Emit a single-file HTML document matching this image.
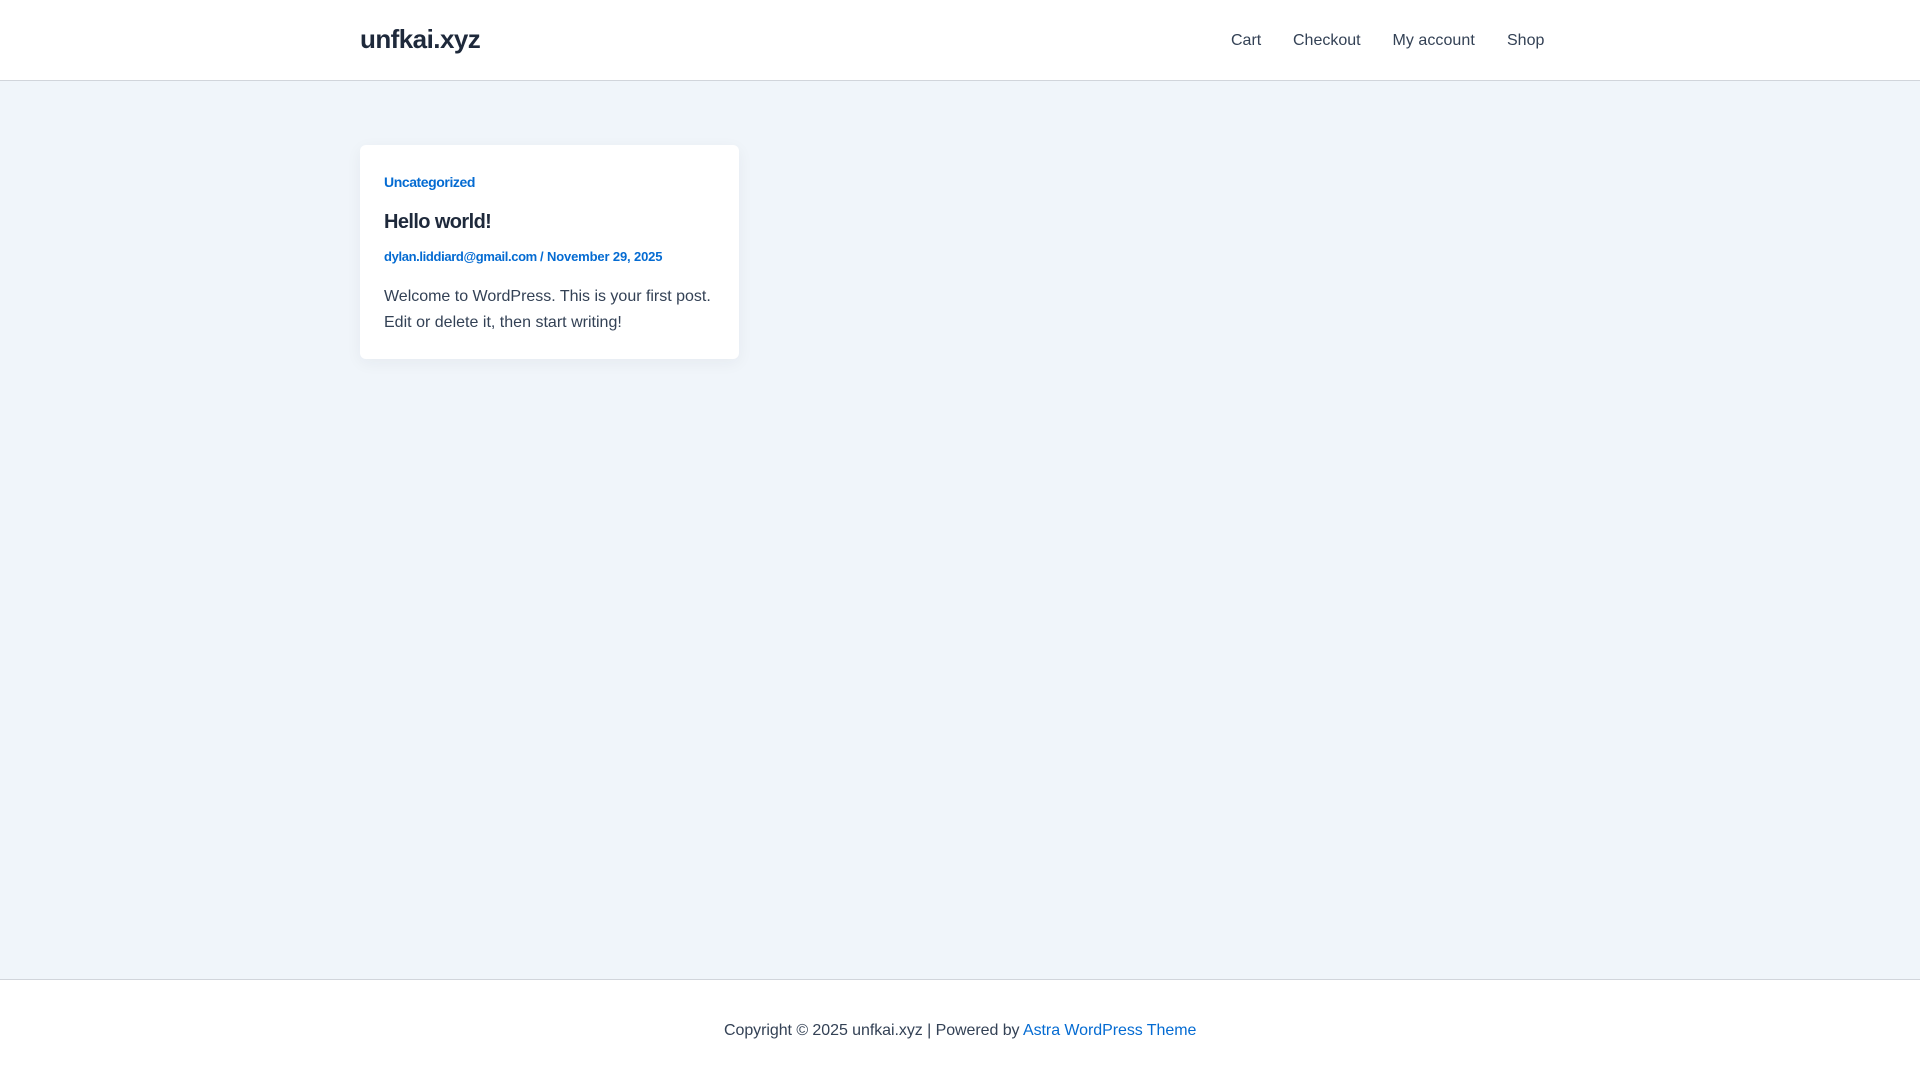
<!DOCTYPE html>
<html lang="en">
<head>
<meta charset="utf-8">
<title>unfkai.xyz</title>
<style>
html,body{margin:0;padding:0;width:1920px;height:1080px;overflow:hidden;background:#f0f5fa;font-family:"Liberation Sans",Arial,sans-serif;color:#334155}
.t{position:absolute;white-space:nowrap;display:block}
a{color:inherit;text-decoration:none}
#hdr{position:absolute;left:0;top:0;width:1920px;height:80px;background:#fff;border-bottom:1px solid #d1d5db}
#ftr{position:absolute;left:0;top:979px;width:1920px;height:100px;background:#fff;border-top:1px solid #d1d5db}
#card{position:absolute;left:360px;top:145px;width:379px;height:214px;background:#fff;border-radius:6px;box-shadow:0 4px 16px rgba(30,41,59,.05)}
.b{color:#046bd2;font-weight:bold}
</style>
</head>
<body>
<div id="hdr"></div>
<a class="t" href="#" style="left:360px;top:23px;font-size:26px;line-height:32px;font-weight:bold;color:#1e293b;letter-spacing:-.55px">unfkai.xyz</a>
<a class="t" href="#" style="left:1231px;top:31px;font-size:16px;line-height:20px">Cart</a>
<a class="t" href="#" style="left:1293px;top:31px;font-size:16px;line-height:20px">Checkout</a>
<a class="t" href="#" style="left:1392.5px;top:31px;font-size:16px;line-height:20px;letter-spacing:.05px">My account</a>
<a class="t" href="#" style="left:1507px;top:31px;font-size:16px;line-height:20px">Shop</a>
<div id="card"></div>
<a class="t b" href="#" style="left:384px;top:173px;font-size:14px;line-height:18px;letter-spacing:-.42px">Uncategorized</a>
<a class="t" href="#" style="left:384px;top:209px;font-size:20px;line-height:26px;font-weight:bold;color:#1e293b;letter-spacing:-.6px">Hello world!</a>
<span class="t b" style="left:384px;top:249px;font-size:13px;line-height:16px;letter-spacing:-.36px">dylan.liddiard@gmail.com</span>
<span class="t b" style="left:540px;top:249px;font-size:13px;line-height:16px;letter-spacing:-.14px">/ November 29, 2025</span>
<span class="t" style="left:384px;top:284px;font-size:16px;line-height:26px;letter-spacing:-.01px">Welcome to WordPress. This is your first post.</span>
<span class="t" style="left:384px;top:310px;font-size:16px;line-height:26px;letter-spacing:.01px">Edit or delete it, then start writing!</span>
<div id="ftr"></div>
<span class="t" style="left:724px;top:1021px;font-size:16px;line-height:20px;letter-spacing:-.06px">Copyright © 2025 unfkai.xyz | Powered by <a href="#" style="color:#046bd2">Astra WordPress Theme</a></span>
</body>
</html>
